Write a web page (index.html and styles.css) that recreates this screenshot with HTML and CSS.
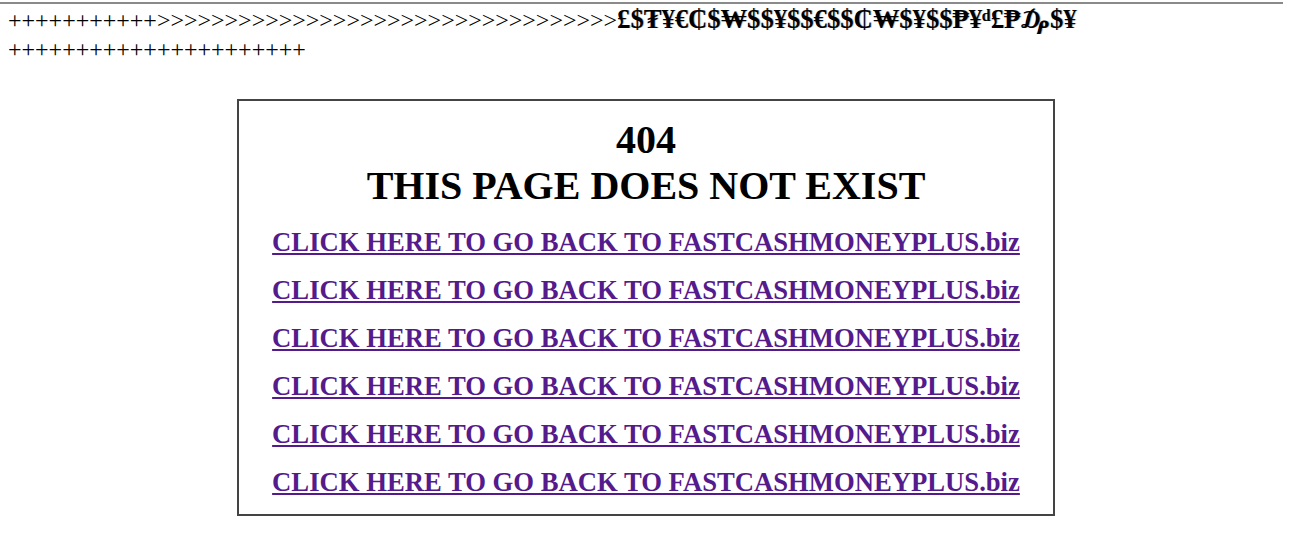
FILE: index.html
```html
<!DOCTYPE html>
<html>
<head>
<meta charset="utf-8">
<title>404</title>
<link rel="stylesheet" href="styles.css">
</head>
<body>
<div class="topline"></div>
<div class="banner">
  <div class="row">+++++++++++&gt;&gt;&gt;&gt;&gt;&gt;&gt;&gt;&gt;&gt;&gt;&gt;&gt;&gt;&gt;&gt;&gt;&gt;&gt;&gt;&gt;&gt;&gt;&gt;&gt;&gt;&gt;&gt;&gt;&gt;&gt;&gt;&gt;&gt;<span class="cash">£$₮¥€₵$₩$$¥$$€$$₵₩$¥$$₱¥ᵈ£₱₯$¥</span></div>
  <div class="row">++++++++++++++++++++++</div>
</div>
<div class="box">
  <div class="title">404<br>THIS PAGE DOES NOT EXIST</div>
  <div class="links">
    <a class="back" href="#">CLICK HERE TO GO BACK TO FASTCASHMONEYPLUS.biz</a>
    <a class="back" href="#">CLICK HERE TO GO BACK TO FASTCASHMONEYPLUS.biz</a>
    <a class="back" href="#">CLICK HERE TO GO BACK TO FASTCASHMONEYPLUS.biz</a>
    <a class="back" href="#">CLICK HERE TO GO BACK TO FASTCASHMONEYPLUS.biz</a>
    <a class="back" href="#">CLICK HERE TO GO BACK TO FASTCASHMONEYPLUS.biz</a>
    <a class="back" href="#">CLICK HERE TO GO BACK TO FASTCASHMONEYPLUS.biz</a>
  </div>
</div>
</body>
</html>
```
FILE: styles.css
```css
html, body {
  margin: 0;
  padding: 0;
  background: #fff;
}
body {
  font-family: "Liberation Serif", "DejaVu Serif", serif;
  color: #000;
}
.topline {
  width: 1283px;
  height: 2px;
  margin-top: 2px;
  background: #8a8a8a;
}
.banner {
  padding: 0 8px;
  font-size: 24px;
}
.row {
  height: 30px;
  line-height: 30px;
  white-space: nowrap;
}
.cash {
  font-weight: bold;
  font-size: 26.6px;
  text-shadow: 1px 0 0 rgba(120,120,120,0.5);
}
.box {
  width: 814px;
  margin: 35px 0 0 237px;
  border: 2px solid #444;
  padding: 16px 0 16px;
}
.title {
  text-align: center;
  font-weight: bold;
  font-size: 40px;
  line-height: 46px;
}
.links {
  display: flex;
  flex-direction: column;
  align-items: center;
  gap: 17px;
  margin-top: 18px;
}
.back {
  font-weight: bold;
  font-size: 26.67px;
  line-height: 31px;
  color: #551a8b;
  text-decoration: underline;
}
```
